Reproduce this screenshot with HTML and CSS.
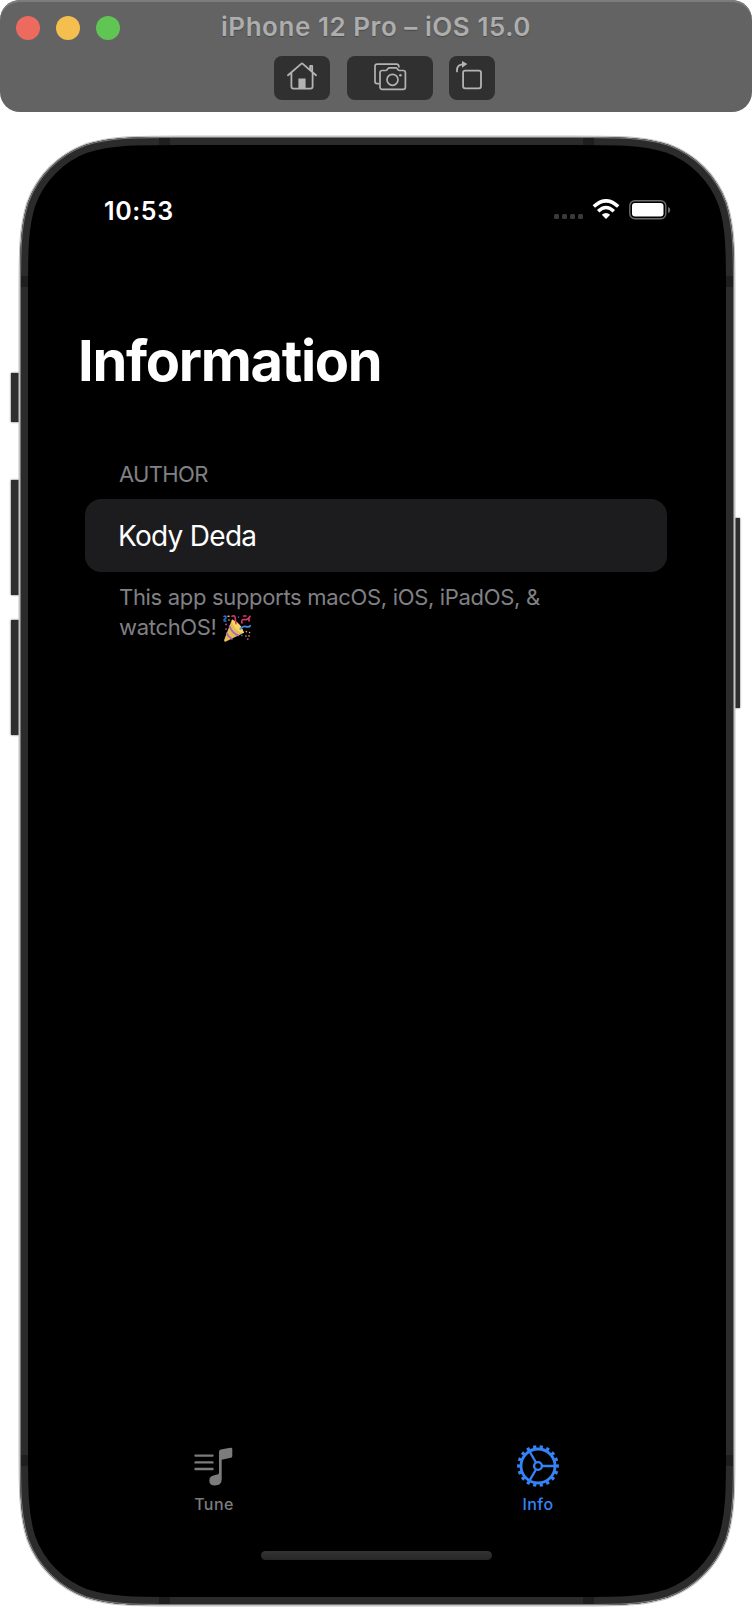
FILE: index.html
```
<!DOCTYPE html>
<html lang="en">
<head>
<meta charset="utf-8">
<title>iPhone 12 Pro – iOS 15.0</title>
<link rel="stylesheet" href="styles.css">
</head>
<body>
<header class="titlebar">
  <div class="lights"><i class="light red"></i><i class="light yellow"></i><i class="light green"></i></div>
  <h1 class="window-title">iPhone 12 Pro – iOS 15.0</h1>
  <div class="tools">
    <button class="tool home" aria-label="Home">
      <svg width="32" height="30" viewBox="0 0 32 30" fill="none" stroke="#b3b3b3" stroke-width="1.8" stroke-linecap="round" stroke-linejoin="round"><path d="M2 14.3 15.2 2.9Q16 2.2 16.8 2.9L30 14.3M5.4 12V25.5Q5.4 27.6 7.5 27.6H24.5Q26.6 27.6 26.6 25.5V12M24.2 8.7V4.9H26.2V10.5"/><path d="M12.4 27.4V17.5H19.6V27.4Z" fill="#b3b3b3" stroke="none"/></svg>
    </button>
    <button class="tool camera" aria-label="Screenshot">
      <svg width="34" height="28" viewBox="0 0 34 28" fill="none" stroke="#b3b3b3" stroke-width="1.7" stroke-linecap="round" stroke-linejoin="round"><path d="M4.6 20.6H3.1Q1 20.6 1 18.4V3.3Q1 1.1 3.2 1.1H22.7Q24.8 1.1 24.9 3.8"/><path d="M8.3 7.5H11.7Q12.6 7.5 13.2 6.6L14 5.5Q14.5 4.9 15.4 4.9H21.7Q22.6 4.9 23.1 5.5L24 6.7Q24.6 7.5 25.5 7.5H29.1Q31.4 7.5 31.4 9.8V23.9Q31.4 26.3 29.1 26.3H8.3Q6 26.3 6 23.9V9.8Q6 7.5 8.3 7.5Z"/><circle cx="18.5" cy="16.8" r="5.5"/><circle cx="26.4" cy="12.2" r="1.3" fill="#b3b3b3" stroke="none"/></svg>
    </button>
    <button class="tool rotate" aria-label="Rotate">
      <svg width="30" height="30" viewBox="0 0 30 30" fill="none" stroke="#b3b3b3" stroke-width="1.8" stroke-linecap="round"><rect x="9.1" y="10.7" width="17.9" height="17.6" rx="2"/><path d="M3 11.4V10.2Q3 4.9 8.2 4.3"/><path d="M8 1 13.4 4.1 8 7.7Z" fill="#b3b3b3" stroke="none"/></svg>
    </button>
  </div>
</header>

<main class="device">
  <i class="key mute"></i><i class="key volume-up"></i><i class="key volume-down"></i><i class="key power"></i>
  <svg class="frame" width="714" height="1468" viewBox="0 0 714 1468">
    <defs>
      <path id="body" d="M159 0H555C600.8 0 623.7 0 648.3 7.8C675.2 17.6 696.4 38.8 706.2 65.7C714 90.3 714 113.2 714 159V1309C714 1354.8 714 1377.7 706.2 1402.3C696.4 1429.2 675.2 1450.4 648.3 1460.2C623.7 1468 600.8 1468 555 1468H159C113.2 1468 90.3 1468 65.7 1460.2C38.8 1450.4 17.6 1429.2 7.8 1402.3C0 1377.7 0 1354.8 0 1309V159C0 113.2 0 90.3 7.8 65.7C17.6 38.8 38.8 17.6 65.7 7.8C90.3 0 113.2 0 159 0Z"/>
      <clipPath id="inside"><use href="#body"/></clipPath>
    </defs>
    <use href="#body" fill="none" stroke="#c4c4c4" stroke-width="3"/>
    <use href="#body" fill="#000"/>
    <g clip-path="url(#inside)" fill="none"><use href="#body" stroke="#2b2b2b" stroke-width="16"/><use href="#body" stroke="#777" stroke-width="2"/></g>
  </svg>
  <i class="band top left"></i><i class="band top right"></i><i class="band bottom left"></i><i class="band bottom right"></i>
  <i class="band side-top left-side"></i><i class="band side-top right-side"></i><i class="band side-bottom left-side"></i><i class="band side-bottom right-side"></i>
  <section class="screen">
    <div class="status">
      <span class="clock">10:53</span>
      <div class="signals">
        <span class="dots"><i></i><i></i><i></i><i></i></span>
        <svg class="wifi" width="28" height="21" viewBox="0 0 28 21" fill="none" stroke="#fff" stroke-width="3.5"><path d="M1.8 7.6Q14-4 26.2 7.6"/><path d="M6.2 12.2Q14 4.8 21.8 12.2"/><path d="M14 20 9.8 15.7Q14 12.4 18.2 15.7Z" fill="#fff" stroke="none"/></svg>
        <svg class="battery" width="42" height="20" viewBox="0 0 42 20"><rect x=".8" y=".8" width="36" height="18" rx="5" fill="none" stroke="#6c6c6c" stroke-width="1.4"/><rect x="3" y="3" width="31.5" height="13.6" rx="3" fill="#fff"/><path d="M39 7Q41.3 7.6 41.3 10T39 13Z" fill="#6c6c6c"/></svg>
      </div>
    </div>
    <h2 class="heading">Information</h2>
    <h3 class="label">AUTHOR</h3>
    <div class="card">Kody Deda</div>
    <p class="note"><span class="line-one">This app supports macOS, iOS, iPadOS, &amp;</span><br>watchOS!
      <svg class="popper" role="img" aria-label="Party popper" width="28" height="28" viewBox="0 0 28 28" fill="none" stroke-linecap="round">
        <path d="M9 4.5 1.1 25Q.8 27.2 3 26.6L21 17.7Q17.5 10 9 4.5Z" fill="#e9bd4f"/>
        <path d="M9 4.5Q18 8 21 17.7Q17 19 12 12.5Q8 7 9 4.5Z" fill="#f8d668"/>
        <path d="M6.6 11.2Q9 18 15.3 20.4M3.8 18.3Q5.3 22 8.8 23.8" stroke="#a16bc0" stroke-width="1.8"/>
        <path d="M1 1.5Q3 .4 3 2.2T1 4.4M1 6H3" stroke="#2f72d8" stroke-width="1.5"/>
        <path d="M9 1.2Q12 0 12.2 3T13 8.6M19 8Q18 4 21.5 4.6T27 1.3M20.5 1H23M26 4V6" stroke="#d83969" stroke-width="1.6"/>
        <path d="M17.3 13.8Q20 10.6 23 11.6T27.2 10.8" stroke="#4a86dc" stroke-width="1.8"/>
        <path d="M6 5V5.1M5 1.2H6" stroke="#e2bb3f" stroke-width="1.6"/>
        <path d="M3 14V14.1M3 9.4V9.5M24.8 24V24.1" stroke="#c35aa6" stroke-width="1.7"/>
        <path d="M23.4 16.6V16.7M26.6 17.5V17.6M23 21V21.1M26 20.8V20.9" stroke="#e2a137" stroke-width="1.6"/>
        <path d="M18.8 20.4V20.5M15.5 2V2.1" stroke="#3276d8" stroke-width="1.6"/>
      </svg>
    </p>
    <nav class="tabs">
      <a class="tab">
        <svg width="42" height="42" viewBox="0 0 42 42" fill="#7c7c7c"><path d="M2.5 10.6H19.5M2.5 17.4H19.5M2.5 24H19.5" stroke="#7c7c7c" stroke-width="2.4" stroke-linecap="round"/><path d="M26 6.8Q26 5 27.8 4.6L37.4 2.7Q39.3 2.3 39.3 4.1V11Q39.3 12.5 37.8 12.8L28.7 14.7V34.3Q28.7 40.5 21.9 40.5Q16.3 40.5 16.3 35.5Q16.3 31.2 21.2 30.2L24.4 29.5Q26 29.2 26 27.7Z"/></svg>
        <span>Tune</span>
      </a>
      <a class="tab active">
        <svg width="42" height="42" viewBox="0 0 42 42" fill="none" stroke="#3483f7"><circle cx="21" cy="21" r="17" stroke-width="2.8"/><circle cx="21" cy="21" r="19.4" stroke-width="3" pathLength="18" stroke-dasharray=".48 .52" stroke-dashoffset=".24"/><circle cx="21" cy="21" r="3.9" stroke-width="2.4"/><path d="M25 21H38M19 17.5 12.5 6.3M19 24.5 12.5 35.7" stroke-width="2.3"/></svg>
        <span>Info</span>
      </a>
    </nav>
    <div class="indicator"></div>
  </section>
</main>
</body>
</html>
```
FILE: styles.css
```
* { box-sizing: border-box; }
body { margin: 0; width: 752px; height: 1610px; background: #fff; font-family: Inter, "Open Sans", sans-serif; overflow: hidden; }
h1, h2, h3, p { margin: 0; }
svg { display: block; }

.titlebar { position: relative; height: 112px; background: #636363; border-radius: 20px; box-shadow: inset 0 2px 0 #7c7c7c; }
.lights { position: absolute; left: 16px; top: 16px; display: flex; gap: 16px; }
.light { width: 24px; height: 24px; border-radius: 50%; }
.red { background: #ed6a5e; }
.yellow { background: #f5bf4f; }
.green { background: #61c554; }
.window-title { height: 54px; line-height: 54px; text-align: center; font-size: 26px; font-weight: 600; color: #adadad; text-shadow: 0 1px 1px #484848; letter-spacing: .54px; }
.tools { display: flex; gap: 16px; padding: 2px 0 0 274px; }
.tool { display: flex; justify-content: center; height: 44px; padding: 0; border: 0; border-radius: 8px; background: #303030; }
.home { width: 56px; padding-top: 5px; }
.camera { width: 86px; margin-left: 1px; padding: 7px 0 0 2px; }
.rotate { width: 46px; padding: 4px 7px 0 0; }

.device { position: relative; width: 714px; height: 1468px; margin: 25px 0 0 20px; padding: 8px; }
.frame { position: absolute; left: 0; top: 0; overflow: visible; }
.screen { position: relative; height: 1452px; padding: 50px 26px 0 24px; }
.key { position: absolute; left: -9px; width: 9px; background: #2e2e2e; box-shadow: 0 0 2px #555; }
.mute { top: 236px; height: 49px; }
.volume-up { top: 343px; height: 115px; }
.volume-down { top: 483px; height: 115px; }
.power { left: 713px; top: 381px; width: 7px; height: 190px; }
.band { position: absolute; background: #1e1e1e; }
.top, .bottom { width: 11px; height: 7px; }
.top { top: 1px; }
.bottom { bottom: 1px; }
.left { left: 139px; }
.right { right: 140px; }
.side-top, .side-bottom { width: 7px; height: 11px; }
.side-top { top: 139px; }
.side-bottom { bottom: 139px; }
.left-side { left: 1px; }
.right-side { right: 1px; }

.status { display: flex; justify-content: space-between; height: 31px; padding: 0 29px 0 52px; color: #fff; }
.clock { padding-top: 1px; font-size: 25px; line-height: 31px; font-weight: 600; letter-spacing: .6px; }
.signals { display: flex; padding-top: 4px; }
.dots { display: flex; gap: 3px; padding: 15px 9px 0 0; }
.dots i { width: 5px; height: 5px; border-radius: 1.5px; background: #3a3a3a; }
.battery { margin: 1px 0 0 9px; }
.heading { margin: 101px 0 0 26px; font-size: 56px; line-height: 68px; font-weight: 700; color: #fff; letter-spacing: -1.3px; }
.label { margin: 66px 0 0 67px; font-size: 22px; line-height: 27px; font-weight: 400; color: #808085; letter-spacing: -.65px; }
.card { height: 73px; margin: 11px 33px 0 33px; padding-left: 33px; border-radius: 16px; background: #1c1c1e; color: #fff; font-size: 28px; line-height: 75px; letter-spacing: -.72px; }
.note { margin: 10px 0 0 67px; font-size: 22px; line-height: 30px; color: #808085; white-space: nowrap; letter-spacing: -.32px; }
.popper { display: inline-block; vertical-align: -7px; margin-bottom: -1px; }
.tabs { display: flex; margin-top: 803px; }
.tab { flex: 1; display: flex; flex-direction: column; align-items: center; color: #7c7c7c; font-size: 16px; line-height: 20px; font-weight: 500; letter-spacing: .45px; }
.active { color: #3483f7; }
.tab span { margin-top: 7px; }
.indicator { width: 231px; height: 9px; margin: 37px auto 0; border-radius: 5px; background: linear-gradient(#333, #262626); }
```
